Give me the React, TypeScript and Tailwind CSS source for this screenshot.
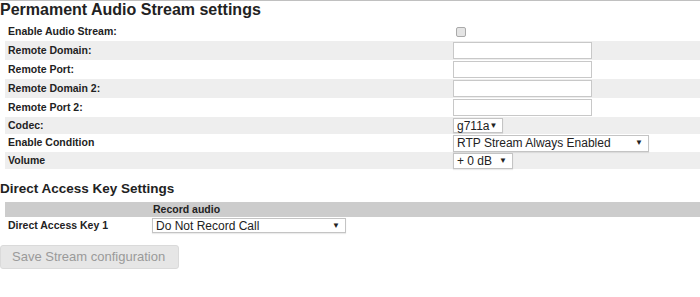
const rows = [
  { label: "Enable Audio Stream:", kind: "check" },
  { label: "Remote Domain:", kind: "input" },
  { label: "Remote Port:", kind: "input" },
  { label: "Remote Domain 2:", kind: "input" },
  { label: "Remote Port 2:", kind: "input" },
  { label: "Codec:", kind: "codec" },
  { label: "Enable Condition", kind: "cond" },
  { label: "Volume", kind: "vol" },
];

const FakeSelect = ({ text, w, h }: { text: string; w: string; h: string }) => (
  <div
    className={`${w} ${h} flex items-center justify-between bg-white border border-[#c4c4c4] shadow-[0_1px_1px_rgba(0,0,0,0.08)] pl-[3px] pr-[5px] text-[12px] text-[#222] leading-none`}
  >
    <span>{text}</span>
    <span className="text-[8px]">▼</span>
  </div>
);

const Field = ({ kind }: { kind: string }) => {
  if (kind === "check")
    return (
      <div className="ml-[3px] w-[10px] h-[10px] rounded-[2px] border border-[#aaa] bg-[#e4e4e4]" />
    );
  if (kind === "input")
    return <div className="w-[139px] h-[17px] bg-white border border-[#c8c8c8]" />;
  if (kind === "codec") return <FakeSelect text="g711a" w="w-[50px]" h="h-[15px]" />;
  if (kind === "cond")
    return <FakeSelect text="RTP Stream Always Enabled" w="w-[196px]" h="h-[17px]" />;
  return <FakeSelect text="+ 0 dB" w="w-[60px]" h="h-[16px]" />;
};

const heights = ["h-[19px]", "h-[19px]", "h-[19px]", "h-[19px]", "h-[19px]", "h-[17px]", "h-[18px]", "h-[17px]"];

export default function App() {
  return (
    <div className="w-[700px] h-[297px] bg-white font-['Liberation_Sans',Arial,sans-serif] text-[#222] border-t border-[#c0c0c0] overflow-hidden">
      <h2 className="text-[16px] font-bold leading-[18px] h-[21px]">Permament Audio Stream settings</h2>

      <div className="ml-[5px]">
        {rows.map((r, i) => (
          <div
            key={r.label}
            className={`flex items-center ${heights[i]} ${i % 2 === 1 ? "bg-[#eeeeee]" : ""}`}
          >
            <div className="w-[448px] pl-[3px] text-[10.5px] font-bold">{r.label}</div>
            <Field kind={r.kind} />
          </div>
        ))}
      </div>

      <h3 className="mt-[11px] text-[13.5px] font-bold leading-[17px]">Direct Access Key Settings</h3>

      <div className="ml-[5px] mt-[5px]">
        <div className="flex items-center h-[15px] bg-[#cccccc]">
          <div className="w-[147px]" />
          <div className="text-[10.5px] font-bold pl-[1px]">Record audio</div>
        </div>
        <div className="flex items-center h-[17px]">
          <div className="w-[147px] pl-[3px] text-[10.5px] font-bold">Direct Access Key 1</div>
          <FakeSelect text="Do Not Record Call" w="w-[194px]" h="h-[15px]" />
        </div>
      </div>

      <button className="mt-[11px] w-[179px] h-[24px] rounded-[3px] bg-[#e6e6e6] border border-[#dadada] text-[13px] text-[#9a9a9a] text-left pl-[11px]">
        Save Stream configuration
      </button>
    </div>
  );
}
